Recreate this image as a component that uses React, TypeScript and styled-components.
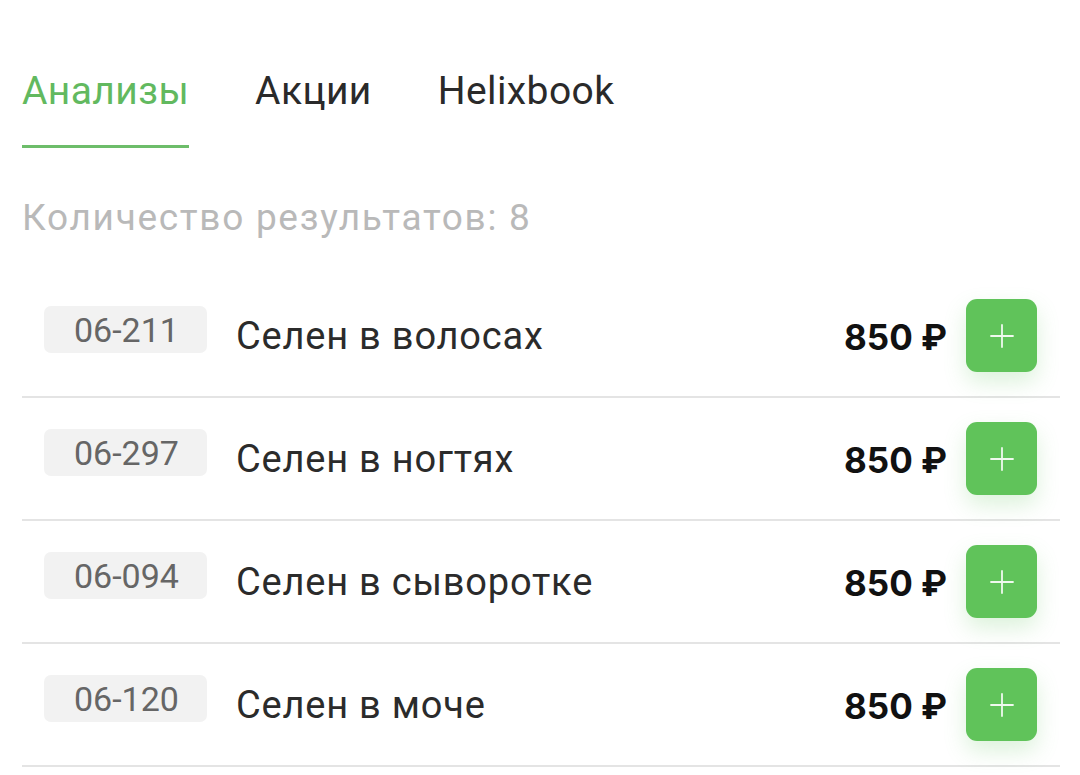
import React from "react";
import styled, { createGlobalStyle } from "styled-components";

const Global = createGlobalStyle`
  html, body { margin: 0; padding: 0; background: #ffffff; }
  body { font-family: Roboto, "Noto Sans", Arial, sans-serif; }
`;

const Page = styled.div`
  width: 1080px;
  height: 775px;
  overflow: hidden;
  padding: 0 20px 0 22px;
  box-sizing: border-box;
`;

const Tabs = styled.nav`
  display: flex;
  gap: 66px;
  padding-top: 65px;
`;

const Tab = styled.div<{ $active?: boolean }>`
  font-family: Roboto, Arial, sans-serif;
  font-size: 39px;
  letter-spacing: 0.4px;
  line-height: 52px;
  color: ${(p) => (p.$active ? "#62b95f" : "#2a2a2a")};
  padding-bottom: 28px;
  border-bottom: 3px solid ${(p) => (p.$active ? "#6dbd6a" : "transparent")};
`;

const Count = styled.div`
  margin-top: 48px;
  font-family: Roboto, Arial, sans-serif;
  font-size: 37px;
  letter-spacing: 1.7px;
  line-height: 44px;
  color: #b9b9b9;
`;

const List = styled.div`
  margin-top: 35px;
  display: flex;
  flex-direction: column;
`;

const Row = styled.div`
  display: flex;
  align-items: center;
  height: 121px;
  border-bottom: 2px solid #e4e4e4;
  padding: 0 23px 0 22px;
`;

const Code = styled.div`
  background: #f2f2f2;
  border-radius: 7px;
  height: 47px;
  padding: 0 28px 0 30px;
  display: flex;
  align-items: center;
  font-family: Roboto, Arial, sans-serif;
  font-size: 34px;
  color: #666666;
  margin-bottom: 12px;
`;

const Name = styled.div`
  flex: 1;
  margin-left: 29px;
  font-family: Roboto, Arial, sans-serif;
  font-size: 38px;
  letter-spacing: 0.8px;
  color: #2b2b2b;
`;

const Price = styled.div`
  font-family: Inter, Roboto, "DejaVu Sans", sans-serif;
  font-weight: 700;
  font-size: 35px;
  color: #111111;
  margin-right: 19px;
  margin-top: 2px;
`;

const AddButton = styled.button`
  width: 71px;
  height: 73px;
  border: none;
  border-radius: 11px;
  background: #60c35a;
  box-shadow: 0 10px 22px rgba(96, 195, 90, 0.22);
  display: flex;
  align-items: center;
  justify-content: center;
  padding: 0;
  cursor: pointer;
`;

const items = [
  { code: "06-211", name: "Селен в волосах", price: "850 ₽" },
  { code: "06-297", name: "Селен в ногтях", price: "850 ₽" },
  { code: "06-094", name: "Селен в сыворотке", price: "850 ₽" },
  { code: "06-120", name: "Селен в моче", price: "850 ₽" },
];

const Plus = () => (
  <svg width="24" height="24" viewBox="0 0 24 24">
    <path d="M12 1v22M1 12h22" stroke="#ffffff" strokeWidth="1.8" strokeLinecap="round" opacity="0.9" />
  </svg>
);

export default function App() {
  return (
    <Page>
      <Global />
      <Tabs>
        <Tab $active>Анализы</Tab>
        <Tab>Акции</Tab>
        <Tab>Helixbook</Tab>
      </Tabs>
      <Count>Количество результатов: 8</Count>
      <List>
        {items.map((it) => (
          <Row key={it.code}>
            <Code>{it.code}</Code>
            <Name>{it.name}</Name>
            <Price>{it.price}</Price>
            <AddButton aria-label="Добавить">
              <Plus />
            </AddButton>
          </Row>
        ))}
      </List>
    </Page>
  );
}
